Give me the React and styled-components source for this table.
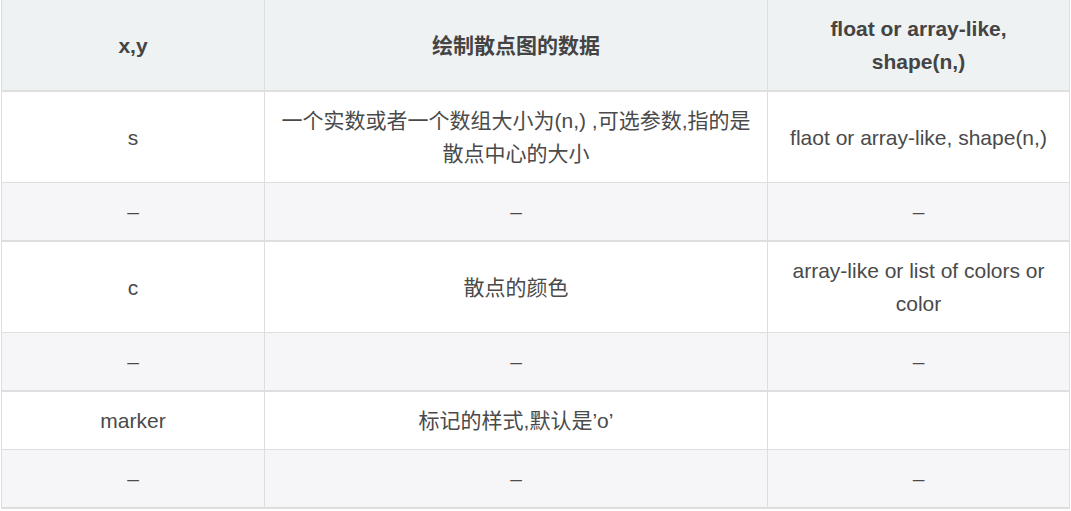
import React from "react";
import styled, { createGlobalStyle } from "styled-components";

const GlobalStyle = createGlobalStyle`
  html, body {
    margin: 0;
    padding: 0;
    overflow: hidden;
    background: #ffffff;
  }
`;

const Page = styled.div`
  padding: 0 2px 0 1px;
  font-family: "Liberation Sans", Arial, "Noto Sans CJK SC", sans-serif;
`;

const Table = styled.table`
  width: 1068px;
  border-collapse: collapse;
  table-layout: fixed;
  border-left: 1px solid #dedede;
  border-right: 1px solid #dedede;
`;

const HeadCell = styled.th`
  background: #eef2f2;
  color: #444444;
  font-size: 21px;
  font-weight: 700;
  line-height: 33px;
  padding: 12px 14px;
  text-align: center;
  vertical-align: middle;
  border-right: 1px solid #dedede;
  border-bottom: 2px solid #dedede;
`;

const Row = styled.tr`
  background: ${({ $striped }) => ($striped ? "#f6f6f8" : "#ffffff")};
  border-bottom: ${({ $striped }) => ($striped ? "2px" : "1px")} solid #dedede;
`;

const Cell = styled.td`
  color: #4a4a4a;
  font-size: 21px;
  line-height: 33px;
  padding: 12px 14px;
  text-align: center;
  vertical-align: middle;
  border-right: 1px solid #dedede;
  height: 33px;
`;

const rows = [
  ["s", "一个实数或者一个数组大小为(n,) ,可选参数,指的是散点中心的大小", "flaot or array-like, shape(n,)"],
  ["–", "–", "–", true],
  ["c", "散点的颜色", "array-like or list of colors or color"],
  ["–", "–", "–", true],
  ["marker", "标记的样式,默认是’o’", ""],
  ["–", "–", "–", true],
];

export default function App() {
  return (
    <>
      <GlobalStyle />
      <Page>
        <Table>
          <colgroup>
            <col style={{ width: 263 }} />
            <col style={{ width: 503 }} />
            <col style={{ width: 302 }} />
          </colgroup>
          <thead>
            <tr>
              <HeadCell>x,y</HeadCell>
              <HeadCell>绘制散点图的数据</HeadCell>
              <HeadCell>float or array-like, shape(n,)</HeadCell>
            </tr>
          </thead>
          <tbody>
            {rows.map(([a, b, c, striped], i) => (
              <Row key={i} $striped={striped}>
                <Cell>{a}</Cell>
                <Cell>{b}</Cell>
                <Cell>{c}</Cell>
              </Row>
            ))}
          </tbody>
        </Table>
      </Page>
    </>
  );
}
